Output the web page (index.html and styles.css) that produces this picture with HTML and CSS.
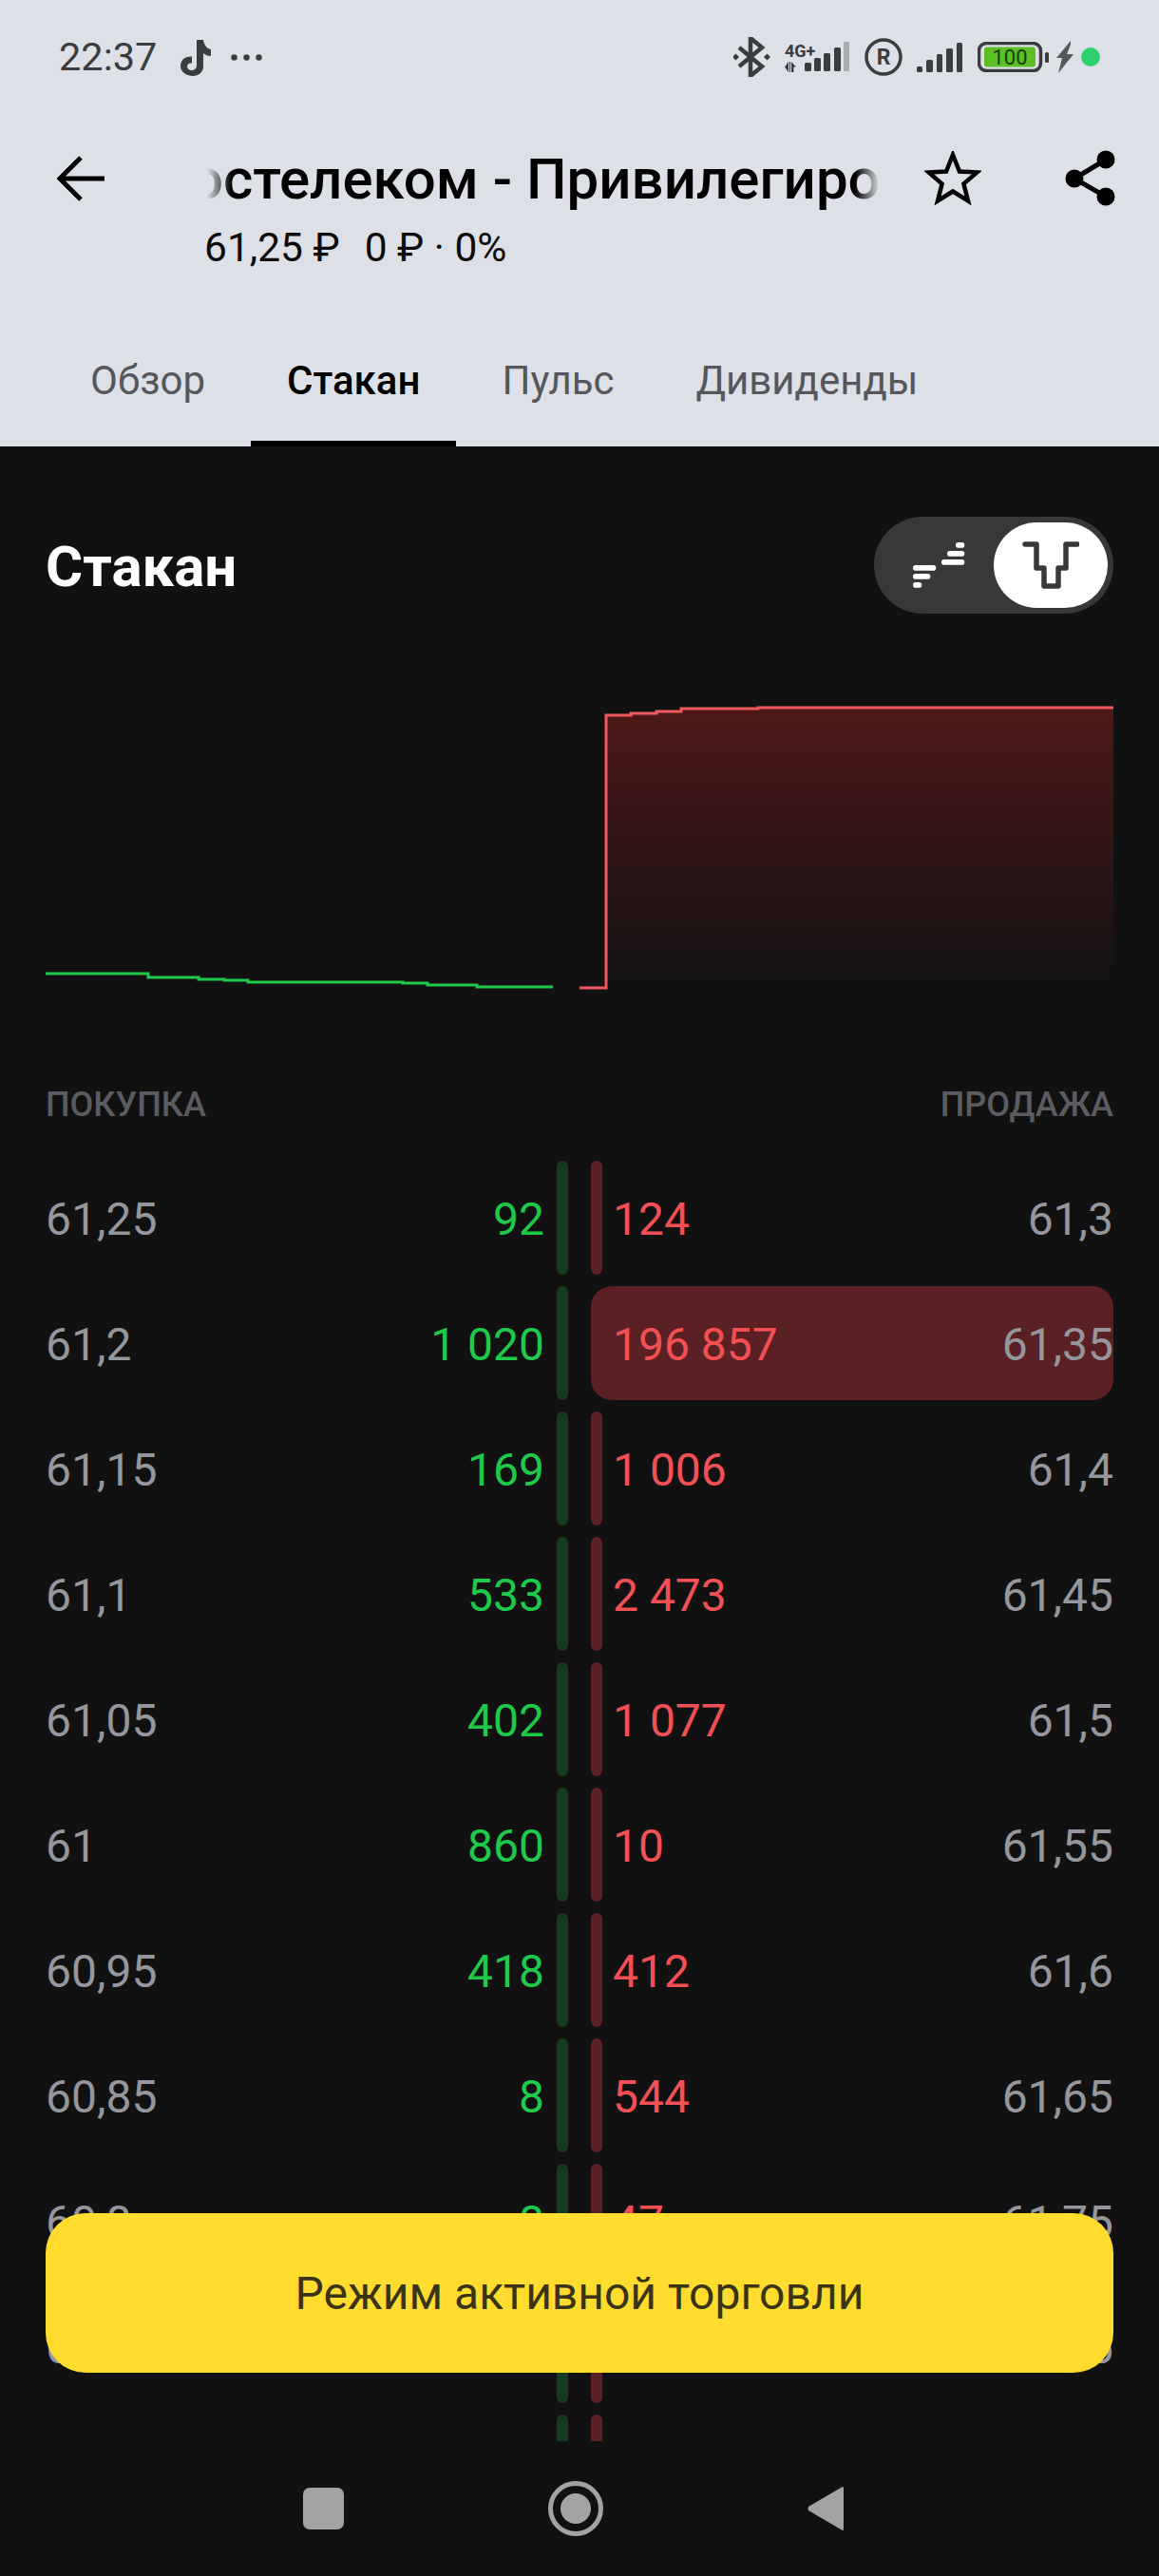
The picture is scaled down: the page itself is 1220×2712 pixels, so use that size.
FILE: index.html
```html
<!DOCTYPE html>
<html lang="ru">
<head>
<meta charset="utf-8">
<title>Стакан</title>
<link rel="stylesheet" href="styles.css">
</head>
<body>
<div class="screen">
  <header class="top">
    <div class="status">
      <div class="status-left">
        <span class="time">22:37</span>
        <svg class="ic-tiktok" viewBox="0 0 35 39"><path d="M20 1h7c.6 5 3.5 9 8 10v7c-3 0-6-1-8-3v14c0 6-5 10-11 10S3 35 3 28.5 8 18 15 18.5v7c-3-.5-5 .8-5 3.5 0 2 2 4 4.5 4 3 0 5.5-2 5.5-5z"/></svg>
        <svg class="ic-dots" viewBox="0 0 33 7"><circle cx="3.5" cy="3.5" r="3.2"/><circle cx="16.5" cy="3.5" r="3.2"/><circle cx="29.5" cy="3.5" r="3.2"/></svg>
      </div>
      <div class="status-right">
        <svg class="ic-bt" viewBox="0 0 39 42"><path class="line" d="M6 11 30 31 18 41V1L30 11 6 31"/><rect x="0" y="18.500" width="5" height="5" transform="rotate(45 2.500 21)"/><rect x="33" y="18.500" width="5" height="5" transform="rotate(45 35.500 21)"/></svg>
        <svg class="ic-net" viewBox="0 0 69 32">
          <text x="0" y="16" class="net-text">4G+</text>
          <path d="M4 21v11L0 26.500zM6 21v11h-1V21zM7 21l5 5.500H9.500V32H7z"/>
          <rect x="21" y="22" width="7" height="9" rx="1.500"/><rect x="31" y="17" width="7" height="14" rx="1.500"/><rect x="41" y="12" width="7" height="19" rx="1.500"/><rect x="52" y="6" width="7" height="25" rx="1.500"/><rect x="62" y="0" width="6" height="31" rx="1" class="dim"/>
        </svg>
        <svg class="ic-r" viewBox="0 0 40 40"><circle class="line" cx="20" cy="20" r="18"/><text x="20" y="28" text-anchor="middle" class="r-text">R</text></svg>
        <svg class="ic-sig" viewBox="0 0 48 31"><rect x="0" y="25" width="6" height="6" rx="1.500"/><rect x="10" y="18" width="7" height="13" rx="1.500"/><rect x="21" y="12" width="6" height="19" rx="1.500"/><rect x="31" y="6" width="7" height="25" rx="1.500"/><rect x="42" y="0" width="6" height="31" rx="1.500"/></svg>
        <div class="charge">
          <svg class="ic-bat" viewBox="0 0 75 32"><rect class="line" x="1.500" y="1.500" width="65" height="29" rx="8"/><rect class="bat-fill" x="7" y="5.500" width="54" height="21" rx="3"/><text x="34" y="24" text-anchor="middle" class="bat-text">100</text><rect x="71" y="11" width="4" height="11" rx="1.500"/></svg>
          <svg class="ic-bolt" viewBox="0 0 18 34"><path d="M15 0 0 18H6L2 34 18 14H11L15 4z"/></svg>
          <span class="dot"></span>
        </div>
      </div>
    </div>
    <div class="bar">
      <svg class="ic-back" viewBox="0 0 50 48"><path d="M2 24H50M25 2 3 24 25 46"/></svg>
      <div class="head">
        <div class="title-wrap"><div class="title">Ростелеком - Привилегированные акции</div></div>
        <div class="price">61,25 ₽<span class="change">0 ₽ · 0%</span></div>
      </div>
      <svg class="ic-star" viewBox="0 0 60 57"><path d="M30 4 37 21.500 55.500 22.500 41.400 34.500 46 52.500 30 42.500 14 52.500 18.600 34.500 4.500 22.500 23 21.500z"/></svg>
      <svg class="ic-share" viewBox="0 0 55 59"><path class="line" d="M44 10 11 30 44 49"/><circle cx="44" cy="10" r="9.500"/><circle cx="11" cy="30" r="9.500"/><circle cx="44" cy="49" r="9.500"/></svg>
    </div>
    <nav class="tabs">
      <span class="tab">Обзор</span>
      <span class="tab active">Стакан</span>
      <span class="tab">Пульс</span>
      <span class="tab">Дивиденды</span>
    </nav>
  </header>

  <main class="main">
    <div class="heading">
      <h1 class="h1">Стакан</h1>
      <div class="toggle">
        <span class="seg">
          <svg class="ic-steps" viewBox="0 0 55 48"><rect x="0" y="24" width="24.300" height="5.700" rx="2.800"/><rect x="0" y="33" width="18.300" height="5.700" rx="2.800"/><rect x="0" y="42" width="9.300" height="5.700" rx="2.800"/><rect x="45" y="0" width="9.300" height="5.700" rx="2.800"/><rect x="36" y="9" width="18.300" height="5.700" rx="2.800"/><rect x="30" y="18" width="24.300" height="5.700" rx="2.800"/></svg>
        </span>
        <span class="knob">
          <svg class="ic-glass" viewBox="0 0 60 50"><path d="M3 3H15V28H23V47H38V28H46V3H58"/></svg>
        </span>
      </div>
    </div>

    <svg class="chart" viewBox="0 0 1124 325">
      <defs>
        <linearGradient id="askfill" x1="0" y1="0" x2="0" y2="1">
          <stop offset="0" stop-color="#4f1818"/>
          <stop offset="1" stop-color="#4f1818" stop-opacity="0"/>
        </linearGradient>
      </defs>
      <path fill="url(#askfill)" d="M590 33H616V31H643V29H669V26H750V25H1124V320H590z"/>
      <path class="depth-ask" d="M562 320H590V33H616V31H643V29H669V26H750V25H1124"/>
      <path class="depth-bid" d="M0 305H108V309H161V311H188V312H213V314H376V315H402V317H454V319H534"/>
    </svg>

    <div class="labels"><span>ПОКУПКА</span><span>ПРОДАЖА</span></div>

    <div class="book">
      <div class="row"><div class="bid"><span class="px">61,25</span><span class="qty-b">92</span><i class="bar-b"></i></div><div class="ask"><i class="bar-a"></i><span class="qty-a">124</span><span class="px">61,3</span></div></div>
      <div class="row"><div class="bid"><span class="px">61,2</span><span class="qty-b">1 020</span><i class="bar-b"></i></div><div class="ask hot"><i class="bar-a"></i><span class="qty-a">196 857</span><span class="px">61,35</span></div></div>
      <div class="row"><div class="bid"><span class="px">61,15</span><span class="qty-b">169</span><i class="bar-b"></i></div><div class="ask"><i class="bar-a"></i><span class="qty-a">1 006</span><span class="px">61,4</span></div></div>
      <div class="row"><div class="bid"><span class="px">61,1</span><span class="qty-b">533</span><i class="bar-b"></i></div><div class="ask"><i class="bar-a"></i><span class="qty-a">2 473</span><span class="px">61,45</span></div></div>
      <div class="row"><div class="bid"><span class="px">61,05</span><span class="qty-b">402</span><i class="bar-b"></i></div><div class="ask"><i class="bar-a"></i><span class="qty-a">1 077</span><span class="px">61,5</span></div></div>
      <div class="row"><div class="bid"><span class="px">61</span><span class="qty-b">860</span><i class="bar-b"></i></div><div class="ask"><i class="bar-a"></i><span class="qty-a">10</span><span class="px">61,55</span></div></div>
      <div class="row"><div class="bid"><span class="px">60,95</span><span class="qty-b">418</span><i class="bar-b"></i></div><div class="ask"><i class="bar-a"></i><span class="qty-a">412</span><span class="px">61,6</span></div></div>
      <div class="row"><div class="bid"><span class="px">60,85</span><span class="qty-b">8</span><i class="bar-b"></i></div><div class="ask"><i class="bar-a"></i><span class="qty-a">544</span><span class="px">61,65</span></div></div>
      <div class="row"><div class="bid"><span class="px">60,8</span><span class="qty-b">8</span><i class="bar-b"></i></div><div class="ask"><i class="bar-a"></i><span class="qty-a">47</span><span class="px">61,75</span></div></div>
      <div class="row"><div class="bid"><span class="px">60,75</span><span class="qty-b">5</span><i class="bar-b"></i></div><div class="ask"><i class="bar-a"></i><span class="qty-a">20</span><span class="px">61,85</span></div></div>
      <div class="row"><div class="bid"><i class="bar-b"></i></div><div class="ask"><i class="bar-a"></i></div></div>
    </div>

    <button class="cta">Режим активной торговли</button>

    <div class="sysnav">
      <span class="nav-square"></span>
      <svg class="nav-home" viewBox="0 0 58 58"><circle class="ring" cx="29" cy="29" r="26.500"/><circle cx="29" cy="29" r="16"/></svg>
      <svg class="nav-back" viewBox="0 0 38 48"><path d="M36 1.500Q38 0 38 3V45Q38 48 36 46.500L1 26Q0 24 1 22z"/></svg>
    </div>
  </main>
</div>
</body>
</html>
```

FILE: styles.css
```css
* { box-sizing: border-box; }
html, body { margin: 0; padding: 0; }
body { width: 1220px; height: 2712px; overflow: hidden; background: #111112; font-family: Roboto, "Liberation Sans", sans-serif; }
svg { display: block; flex: none; }
.screen { width: 1220px; height: 2712px; display: flex; flex-direction: column; }

.top { height: 470px; background: #dde0e7; display: flex; flex-direction: column; color: #000; }
.status { height: 120px; display: flex; justify-content: space-between; align-items: center; padding: 0 62px 0 62px; fill: #3a3c40; color: #3a3c40; }
.status-left, .status-right, .charge { display: flex; align-items: center; }
.status-left { gap: 24px; }
.status-right { gap: 15px; }
.charge { gap: 8px; margin-left: 1px; }
.time { font-size: 41.500px; line-height: 48px; width: 101px; }
.ic-tiktok { width: 35px; height: 39px; }
.ic-dots { width: 33px; height: 7px; margin-left: -3px; }
.line { fill: none; stroke: #3a3c40; stroke-width: 3.500; }
.ic-bt { width: 39px; height: 42px; }
.ic-bt .line { stroke-width: 4.500; }
.ic-net { width: 69px; height: 32px; }
.net-text { font-size: 18px; font-weight: 700; fill: #3a3c40; }
.dim { fill: #a9abb0; }
.ic-r { width: 40px; height: 40px; }
.r-text { font-size: 23px; font-weight: 700; }
.ic-sig { width: 48px; height: 31px; }
.ic-bat { width: 75px; height: 32px; }
.bat-fill { fill: #5cbf26; }
.bat-text { font-size: 22px; fill: #123d0a; }
.ic-bolt { width: 18px; height: 34px; fill: #55575b; }
.dot { width: 20px; height: 20px; border-radius: 50%; background: #2fd16d; }

.bar { height: 167px; display: flex; align-items: flex-start; padding-left: 60px; }
.ic-back { width: 50px; height: 48px; margin-top: 44px; fill: none; stroke: #000; stroke-width: 5; }
.head { width: 708px; margin-left: 108px; padding-top: 35px; }
.title-wrap { overflow: hidden; white-space: nowrap; -webkit-mask-image: linear-gradient(90deg, transparent 0, #000 26px, #000 682px, transparent 100%); mask-image: linear-gradient(90deg, transparent 0, #000 26px, #000 682px, transparent 100%); }
.title { font-size: 60px; line-height: 68px; font-weight: 500; margin-left: -55px; }
.price { font-size: 42.500px; line-height: 46px; font-weight: 400; margin: 15px 0 0 -3px; color: #0b0b0c; }
.change { margin-left: 26px; }
.ic-star { width: 60px; height: 57px; margin: 39px 0 0 47px; fill: none; stroke: #000; stroke-width: 4.500; }
.ic-share { width: 55px; height: 59px; margin: 38px 0 0 87px; fill: #000; }
.ic-share .line { stroke: #000; stroke-width: 5; }

.tabs { flex: 1; display: flex; gap: 10px; padding-left: 57px; }
.tab { height: 100%; padding: 50px 38px 0; font-size: 42px; color: #55575c; display: flex; align-items: center; border-bottom: 6px solid transparent; }
.tab.active { color: #000; border-bottom-color: #000; font-weight: 500; }

.main { flex: 1; position: relative; padding: 0 48px; display: flex; flex-direction: column; background: #111112; }
.heading { display: flex; justify-content: space-between; align-items: center; margin-top: 74px; height: 102px; }
.h1 { margin: 4px 0 0; font-size: 60px; line-height: 70px; font-weight: 700; color: #fff; }
.toggle { width: 252px; height: 102px; background: #383838; border-radius: 51px; padding: 6px; display: flex; }
.seg { flex: 1; display: flex; align-items: center; justify-content: center; fill: #fff; padding-left: 4px; }
.ic-steps { width: 55px; height: 48px; }
.knob { width: 120px; height: 90px; background: #fff; border-radius: 45px; display: flex; align-items: center; justify-content: center; }
.ic-glass { width: 60px; height: 50px; fill: none; stroke: #383838; stroke-width: 5.500; stroke-linecap: round; stroke-linejoin: round; }

.chart { width: 1124px; height: 325px; margin-top: 74px; }
.depth-ask { fill: none; stroke: #ef5a5e; stroke-width: 3; }
.depth-bid { fill: none; stroke: #1fc94a; stroke-width: 3; }

.labels { display: flex; justify-content: space-between; margin-top: 98px; height: 40px; font-size: 36px; line-height: 40px; font-weight: 500; color: #5c5c60; }
.book { margin-top: 39px; height: 1348px; overflow: hidden; display: flex; flex-direction: column; gap: 12px; flex: none; }
.row { height: 120px; flex: none; display: grid; grid-template-columns: 550px 550px; gap: 24px; font-size: 48px; color: #96969d; }
.bid, .ask { display: flex; align-items: center; height: 120px; }
.px, .qty-a, .qty-b { padding-top: 2px; }
.qty-b { margin-left: auto; color: #1fc94a; margin-right: 13px; }
.qty-a { color: #f25055; margin-left: 11px; }
.ask .px { margin-left: auto; }
.bar-b, .bar-a { display: block; width: 12px; height: 120px; border-radius: 6px; flex: none; }
.bar-b { background: #153a1e; margin-left: auto; }
.bid .qty-b + .bar-b { margin-left: 0; }
.bar-a { background: #5a2023; }
.hot { background: #5a2023; border-radius: 22px; }
.hot .bar-a { background: transparent; }

.cta { position: absolute; left: 48px; right: 48px; top: 1860px; height: 168px; border: 0; border-radius: 42px; background: #ffdc2e; color: #3a3416; font: 400 48px Roboto, "Liberation Sans", sans-serif; }

.sysnav { flex: 1; display: flex; align-items: center; gap: 215px; padding-left: 271px; }
.nav-square { width: 43px; height: 44px; border-radius: 7px; background: #a3a3a3; }
.nav-home { width: 58px; height: 58px; fill: #a3a3a3; }
.ring { fill: none; stroke: #a3a3a3; stroke-width: 5; }
.nav-back { width: 38px; height: 48px; fill: #a3a3a3; }
```
